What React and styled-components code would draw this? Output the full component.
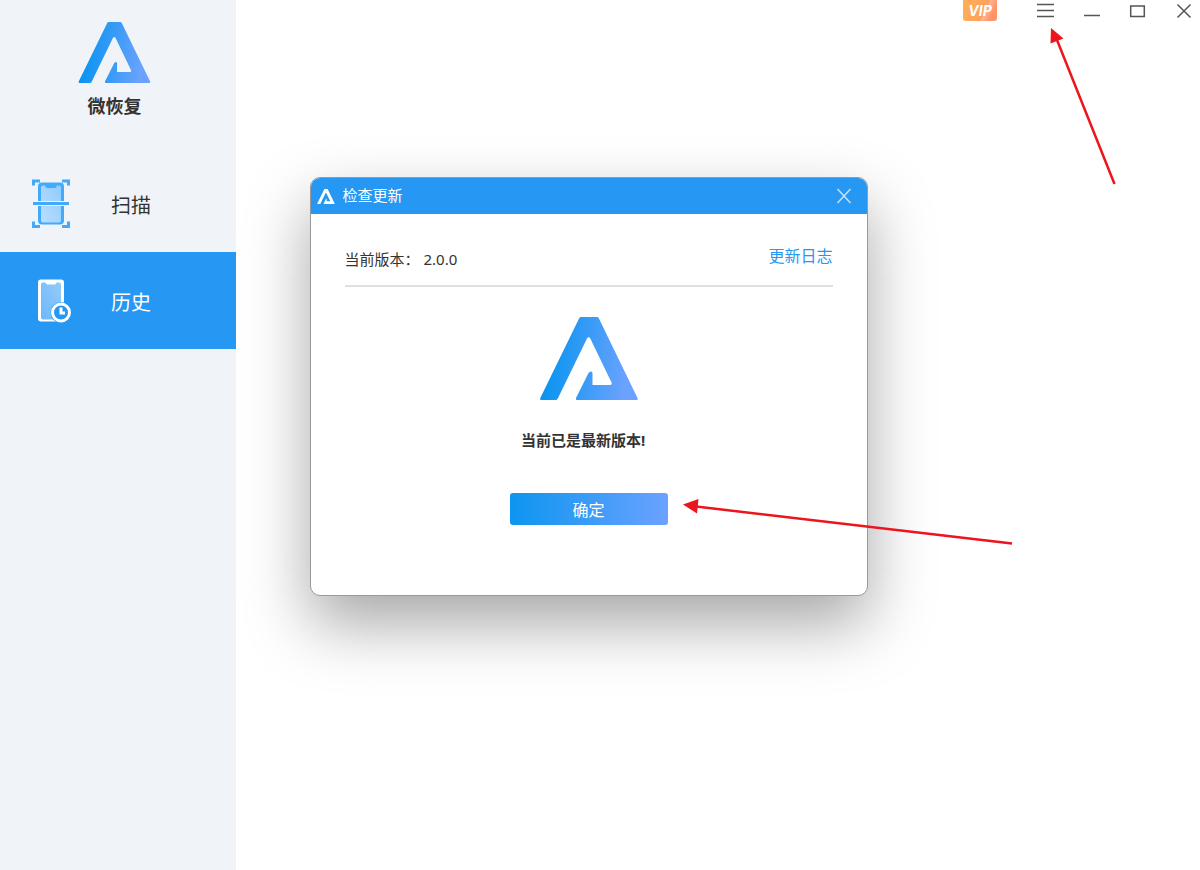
import React, { useState } from 'react';
import styled, { createGlobalStyle } from 'styled-components';

const GlobalStyle = createGlobalStyle`
  body {
    margin: 0;
    background: #fff;
    color: #333;
    font-family: "Noto Sans", "Noto Sans CJK SC", sans-serif;
  }

  button {
    padding: 0;
    border: none;
    background: none;
    font-family: inherit;
    cursor: pointer;
  }
`;

const Logo = ({ id, width, height, flat }) => (
    <svg width={width} height={height} viewBox="0 0 98 83" aria-hidden="true">
        <defs>
            <linearGradient id={id} x1="0" y1="0.45" x2="1" y2="0.55">
                <stop offset="0.1" stopColor="#0c95f0" />
                <stop offset="0.9" stopColor="#6ba2ff" />
            </linearGradient>
        </defs>
        <path
            fill={flat ? '#fff' : `url(#${id})`}
            d="M39.3 1Q39.8 0 41 0H57Q58.2 0 58.7 1L97.5 81Q98.3 83 96.5 83H37Q35.500 83 36 81L48.5 56Q50 54 51.2 54.5Q52.5 55 52.5 56.5V68H70.500Q72.300 67.500 71.500 65.500L50.300 21.500Q48.700 19 47 21.500L17.800 81.500Q17 83 15.500 83H1Q-.3 83 .3 81Z"
        />
    </svg>
);

const ScanIcon = () => (
    <svg width="38" height="50" viewBox="0 0 38 50" aria-hidden="true">
        <defs>
            <linearGradient id="scan-screen" x1="1" y1="0" x2="0" y2="1">
                <stop offset="0" stopColor="#90cbff" />
                <stop offset="1" stopColor="#b8deff" />
            </linearGradient>
        </defs>
        <path d="M1.5 6.500V2H8M30 2H36.5V6.500M1.5 42.500V47.500H8M30 47.500H36.5V42.500" fill="none" stroke="#42a9fb" strokeWidth="3" />
        <rect x="6" y="3.500" width="26" height="42" rx="4" fill="#42a9fb" />
        <path d="M11 6.500H13Q13.500 9 15.500 9H22.500Q24.500 9 25 6.500H27Q29 6.500 29 8.500V41.500Q29 43.500 27 43.500H11Q9 43.500 9 41.500V8.500Q9 6.500 11 6.500Z" fill="url(#scan-screen)" />
        <path d="M1 24.500H37" stroke="#f0f4f8" strokeWidth="5" />
        <path d="M1 24.500H37" stroke="#42a9fb" strokeWidth="3" />
    </svg>
);

const HistoryIcon = () => (
    <svg width="40" height="50" viewBox="0 0 40 50" aria-hidden="true">
        <defs>
            <linearGradient id="history-screen" x1="1" y1="0" x2="0" y2="1">
                <stop offset="0" stopColor="#93cbfb" />
                <stop offset="1" stopColor="#6db8f8" />
            </linearGradient>
        </defs>
        <rect x="6" y="3.500" width="26" height="42" rx="3" fill="#fff" />
        <path d="M11 6.500H13.500Q14 8.500 15.500 8.500H22.500Q24 8.500 24.500 6.500H27Q29 6.500 29 8.500V43.500H11Q9 43.500 9 41.500V8.500Q9 6.500 11 6.500Z" fill="url(#history-screen)" />
        <circle cx="29" cy="36.500" r="10.500" fill="#2698f3" />
        <circle cx="29" cy="36.500" r="8.500" fill="#2698f3" stroke="#fff" strokeWidth="3" />
        <path d="M29 31.500V37H33" fill="none" stroke="#fff" strokeWidth="3" />
    </svg>
);

const WindowIcon = ({ d, stroke = '#555' }) => (
    <svg width="20" height="20" viewBox="0 0 20 20" fill="none" stroke={stroke} strokeWidth="1.500" aria-hidden="true">
        <path d={d} />
    </svg>
);

const windowActions = [
    { label: '菜单', d: 'M1 3.500H18M1 9.500H18M1 15.500H18' },
    { label: '最小化', d: 'M2 14.500H18' },
    { label: '最大化', d: 'M2.700 5H16.300V15.500H2.700Z' },
    { label: '关闭', d: 'M3.500 3.500L16.500 16.500M16.500 3.500L3.500 16.500' },
];

const navItems = [
    { key: 'scan', label: '扫描', Icon: ScanIcon },
    { key: 'history', label: '历史', Icon: HistoryIcon },
];

const UpdateDialog = ({ onClose }) => (
    <Overlay>
        <Dialog role="dialog" aria-labelledby="update-title">
            <DialogHeader>
                <Logo id="logo-title" width={18} height={15} flat />
                <DialogTitle id="update-title">检查更新</DialogTitle>
                <CloseButton type="button" aria-label="关闭" onClick={onClose}>
                    <WindowIcon d="M3.500 3L16.500 17M16.500 3L3.500 17" stroke="#c4e2fc" />
                </CloseButton>
            </DialogHeader>
            <DialogBody>
                <VersionRow>
                    <Version>
                        <span>当前版本：</span>
                        <span>2.0.0</span>
                    </Version>
                    <LogLink href="#log">更新日志</LogLink>
                </VersionRow>
                <Result>
                    <Logo id="logo-dialog" width={98} height={83} />
                    <Message>当前已是最新版本!</Message>
                    <ConfirmButton type="button" onClick={onClose}>确定</ConfirmButton>
                </Result>
            </DialogBody>
        </Dialog>
    </Overlay>
);

const App = () => {
    const [active, setActive] = useState('history');
    const [dialogOpen, setDialogOpen] = useState(true);

    return (
        <Window>
            <GlobalStyle />
            <Sidebar>
                <Brand>
                    <Logo id="logo-brand" width={73} height={61} />
                    <BrandName>微恢复</BrandName>
                </Brand>
                <nav>
                    {navItems.map(({ key, label, Icon }) => (
                        <NavButton key={key} type="button" $active={active === key} onClick={() => setActive(key)}>
                            <IconSlot><Icon /></IconSlot>
                            <NavLabel>{label}</NavLabel>
                        </NavButton>
                    ))}
                </nav>
            </Sidebar>
            <Main>
                <TitleBar>
                    <VipButton type="button">VIP</VipButton>
                    {windowActions.map(({ label, d }) => (
                        <WindowButton key={label} type="button" aria-label={label}>
                            <WindowIcon d={d} />
                        </WindowButton>
                    ))}
                </TitleBar>
            </Main>
            {dialogOpen && <UpdateDialog onClose={() => setDialogOpen(false)} />}
            <Pointer $left={1045} $top={24} width="75" height="165" viewBox="0 0 75 165" aria-hidden="true">
                <path d="M12 16L69.500 160" stroke="#ec141d" strokeWidth="2.500" />
                <path d="M6 4L18.500 14.500L5.500 19.500Z" fill="#ec141d" />
            </Pointer>
            <Pointer $left={680} $top={495} width="336" height="54" viewBox="0 0 336 54" aria-hidden="true">
                <path d="M16 11.500L332 48.500" stroke="#ec141d" strokeWidth="2.500" />
                <path d="M3 9.500L18.500 4L17 18.500Z" fill="#ec141d" />
            </Pointer>
        </Window>
    );
};

const Window = styled.div`
  position: relative;
  display: flex;
  min-height: 100vh;
`;

const Sidebar = styled.aside`
  flex: 0 0 236px;
  background: #f0f4f8;
`;

const Brand = styled.div`
  display: flex;
  flex-direction: column;
  align-items: center;
  gap: 11px;
  padding: 22px 7px 37px 0;
`;

const BrandName = styled.strong`
  font-size: 18px;
  line-height: 24px;
`;

const NavButton = styled.button`
  display: flex;
  align-items: center;
  gap: 41px;
  width: 100%;
  height: 97px;
  padding: 0 32px;
  color: ${({ $active }) => ($active ? '#fff' : '#333')};
  background: ${({ $active }) => ($active ? '#2698f3' : 'transparent')};
`;

const NavLabel = styled.span`
  padding-top: 2px;
  font-size: 20px;
`;

const IconSlot = styled.span`
  display: flex;
  width: 38px;

  svg {
    flex: none;
  }
`;

const Main = styled.main`
  flex: 1;
`;

const TitleBar = styled.header`
  display: flex;
  justify-content: flex-end;
  gap: 16px;
  padding-right: 1px;
`;

const VipButton = styled.button`
  width: 34px;
  height: 21px;
  margin-right: 18px;
  border-radius: 0 0 3px 3px;
  background: linear-gradient(115deg, #ffb054 0%, #ffa060 62%, #ffb596 63%, #ff9468 82%);
  color: #fff;
  font-family: Inter, sans-serif;
  font-size: 14px;
  font-style: italic;
  font-weight: 700;
  line-height: 20px;
`;

const WindowButton = styled.button`
  display: flex;
  align-items: center;
  justify-content: center;
  width: 30px;
  height: 22px;
`;

const Overlay = styled.div`
  position: absolute;
  inset: 0;
  display: flex;
  justify-content: center;
  align-items: flex-start;
  padding: 177px 23px 0 0;
`;

const Dialog = styled.section`
  box-sizing: border-box;
  width: 558px;
  border: 1px solid #999;
  border-radius: 10px;
  background: #fff;
  box-shadow: 0 28px 64px rgba(0, 0, 0, 0.35);
  overflow: hidden;
`;

const DialogHeader = styled.header`
  display: flex;
  align-items: center;
  gap: 8px;
  height: 36px;
  padding: 0 13px 0 6px;
  background: #2698f3;
  color: #fff;
`;

const DialogTitle = styled.h1`
  flex: 1;
  margin: 0;
  font-size: 15px;
  font-weight: 400;
  line-height: 18px;
  padding-bottom: 2px;
`;

const CloseButton = styled.button`
  display: flex;
`;

const DialogBody = styled.div`
  padding: 30px 34px 70px;
`;

const VersionRow = styled.div`
  display: flex;
  justify-content: space-between;
  padding-bottom: 14px;
  border-bottom: 2px solid #e0e0e0;
  line-height: 24px;
`;

const Version = styled.span`
  display: flex;
  gap: 4px;
  padding-top: 3px;
  font-size: 15px;
`;

const LogLink = styled.a`
  color: #2698f3;
  font-size: 16px;
  text-decoration: none;
`;

const Result = styled.div`
  display: flex;
  flex-direction: column;
  align-items: center;
  padding-top: 30px;
`;

const Message = styled.strong`
  margin: 28px 0 41px;
  padding-right: 11px;
  font-size: 15px;
  line-height: 24px;
`;

const ConfirmButton = styled.button`
  width: 158px;
  height: 32px;
  border-radius: 3px;
  background: linear-gradient(90deg, #0c95f0, #6ba2ff);
  color: #fff;
  font-size: 16px;
`;

const Pointer = styled.svg`
  position: absolute;
  left: ${({ $left }) => $left}px;
  top: ${({ $top }) => $top}px;
  pointer-events: none;
`;

export default App;
